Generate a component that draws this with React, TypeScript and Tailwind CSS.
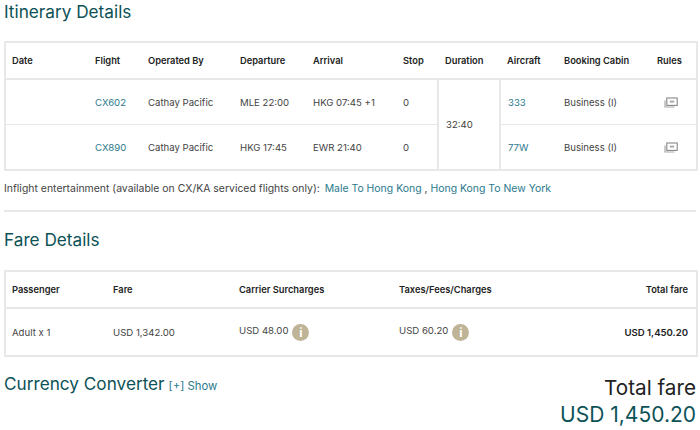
const th = "pl-[7px] text-left font-semibold text-[#222]";
const td = "pl-[7px] pt-[2px] text-[#444]";
const link = "text-[#2b7a8c]";

function RulesIcon() {
  return (
    <svg width="14" height="11" viewBox="0 0 14 11" className="mx-auto">
      <path d="M1 3.5V10H10.5" fill="none" stroke="#aaa" strokeWidth="1.2" />
      <rect x="2.8" y="1" width="10.4" height="7.4" fill="#fff" stroke="#888" strokeWidth="1.1" />
      <rect x="5.8" y="3.6" width="4.4" height="2" fill="#aaa" />
    </svg>
  );
}

function InfoDot() {
  return (
    <span className="ml-[4px] inline-flex h-[17px] w-[17px] items-center justify-center rounded-full bg-[#bfb398] text-[12px] font-bold leading-none text-white">
      i
    </span>
  );
}

export default function App() {
  return (
    <div className="h-[430px] w-[700px] overflow-hidden bg-white font-['Inter',sans-serif] text-[#333]">
      <h2 className="ml-1 text-[17.2px] leading-[24px] text-[#0d5257]">Itinerary Details</h2>

      <table className="ml-1 mt-[17px] w-[692px] table-fixed border-collapse border-2 border-[#e8e8e8] text-[9.6px]">
        <colgroup>
          <col className="w-[83px]" />
          <col className="w-[53px]" />
          <col className="w-[92px]" />
          <col className="w-[73px]" />
          <col className="w-[90px]" />
          <col className="w-[42px]" />
          <col className="w-[62px]" />
          <col className="w-[57px]" />
          <col className="w-[89px]" />
          <col className="w-[51px]" />
        </colgroup>
        <thead>
          <tr className="h-[37px] border-b-2 border-[#e8e8e8] text-[9.3px]">
            <th className="pl-[6px] text-left font-semibold text-[#222]">Date</th>
            <th className={th}>Flight</th>
            <th className={th}>Operated By</th>
            <th className={th}>Departure</th>
            <th className={th}>Arrival</th>
            <th className={th}>Stop</th>
            <th className={th}>Duration</th>
            <th className={th}>Aircraft</th>
            <th className={th}>Booking Cabin</th>
            <th className="pl-[11px] text-left font-semibold text-[#222]">Rules</th>
          </tr>
        </thead>
        <tbody>
          <tr className="h-[45px] border-b border-[#e8e8e8]">
            <td className={td}></td>
            <td className={td}><span className={link}>CX602</span></td>
            <td className={td}>Cathay Pacific</td>
            <td className={td}>MLE 22:00</td>
            <td className={td}>HKG 07:45 +1</td>
            <td className={td}>0</td>
            <td rowSpan={2} className={`${td} border-x-2 border-[#e8e8e8]`}>32:40</td>
            <td className={td}><span className={link}>333</span></td>
            <td className={td}>Business (I)</td>
            <td className="pt-[2px]"><RulesIcon /></td>
          </tr>
          <tr className="h-[46px]">
            <td className={td}></td>
            <td className={td}><span className={link}>CX890</span></td>
            <td className={td}>Cathay Pacific</td>
            <td className={td}>HKG 17:45</td>
            <td className={td}>EWR 21:40</td>
            <td className={td}>0</td>
            <td className={td}><span className={link}>77W</span></td>
            <td className={td}>Business (I)</td>
            <td className="pt-[2px]"><RulesIcon /></td>
          </tr>
        </tbody>
      </table>

      <p className="ml-1 mt-[10px] text-[10.45px] leading-[16px] text-[#444]">
        Inflight entertainment (available on CX/KA serviced flights only):{" "}
        <span className={`ml-[2px] ${link}`}>Male To Hong Kong</span> , <span className={link}>Hong Kong To New York</span>
      </p>

      <div className="ml-1 mt-[13px] h-[2px] w-[692px] bg-[#e8e8e8]" />

      <h2 className="ml-1 mt-[16px] text-[17.2px] leading-[24px] text-[#0d5257]">Fare Details</h2>

      <table className="ml-1 mt-[18px] w-[692px] table-fixed border-collapse border-2 border-[#e8e8e8] text-[9.6px]">
        <colgroup>
          <col className="w-[101px]" />
          <col className="w-[126px]" />
          <col className="w-[160px]" />
          <col className="w-[160px]" />
          <col className="w-[145px]" />
        </colgroup>
        <thead>
          <tr className="h-[37px] border-b-2 border-[#e8e8e8] text-[9.3px]">
            <th className="pl-[6px] text-left font-semibold text-[#222]">Passenger</th>
            <th className={th}>Fare</th>
            <th className={th}>Carrier Surcharges</th>
            <th className={th}>Taxes/Fees/Charges</th>
            <th className="pr-2 text-right font-semibold text-[#222]">Total fare</th>
          </tr>
        </thead>
        <tbody>
          <tr className="h-[48px]">
            <td className="pl-[6px] pt-[2px] text-[#444]">Adult x 1</td>
            <td className={td}>USD 1,342.00</td>
            <td className={td}>
              <span className="flex items-center"><span className="mb-[3px]">USD 48.00</span><InfoDot /></span>
            </td>
            <td className={td}>
              <span className="flex items-center"><span className="mb-[3px]">USD 60.20</span><InfoDot /></span>
            </td>
            <td className="pr-2 pt-[2px] text-right font-semibold text-[#222]">USD 1,450.20</td>
          </tr>
        </tbody>
      </table>

      <div className="mx-1 mt-[15px] flex w-[692px] justify-between">
        <div className="flex items-baseline leading-[24px]">
          <span className="text-[17.2px] text-[#0d5257]">Currency Converter</span>
          <span className={`ml-[4px] text-[11.3px] ${link}`}>[+] Show</span>
        </div>
        <div className="pt-[2px] text-right">
          <div className="text-[20.7px] leading-[27px] text-[#222]">Total fare</div>
          <div className="text-[21px] leading-[28px] text-[#0d5257]">USD 1,450.20</div>
        </div>
      </div>
    </div>
  );
}
